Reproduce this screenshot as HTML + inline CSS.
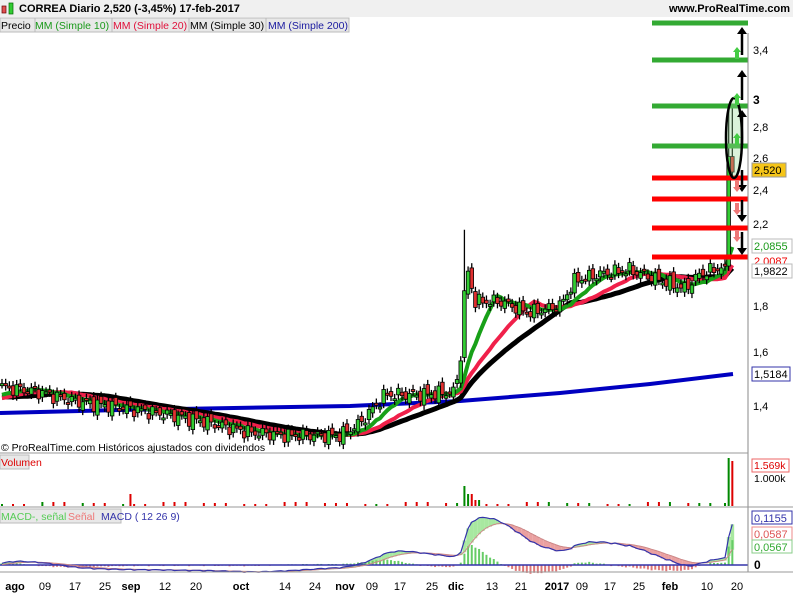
<!DOCTYPE html>
<html><head><meta charset="utf-8"><style>
html,body{margin:0;padding:0;background:#fff;width:793px;height:593px;overflow:hidden;font-family:"Liberation Sans",sans-serif}
svg{display:block}
</style></head><body>
<svg id="s" width="793" height="593" xmlns="http://www.w3.org/2000/svg" font-family="Liberation Sans, sans-serif">
<rect x="0" y="0" width="793" height="17" fill="#f0f0f0"/>
<rect x="2" y="6" width="4" height="7" fill="#e05050" stroke="#600" stroke-width="0.7"/>
<rect x="9" y="3" width="4" height="11" fill="#3c3" stroke="#060" stroke-width="0.7"/>
<text x="19" y="12" font-size="11" font-weight="bold" fill="#000">CORREA   Diario   2,520 (-3,45%)   17-feb-2017</text>
<text x="790" y="12" font-size="11" font-weight="bold" fill="#000" text-anchor="end">www.ProRealTime.com</text>
<rect x="0" y="18" width="349" height="14" fill="#e8e8e8" stroke="#bbb"/>
<text x="1" y="29" font-size="10.5" fill="#000">Precio</text>
<text x="35" y="29" font-size="10.5" fill="#1a9a1a">MM (Simple 10)</text>
<text x="113" y="29" font-size="10.5" fill="#e0103a">MM (Simple 20)</text>
<text x="190" y="29" font-size="10.5" fill="#000">MM (Simple 30)</text>
<text x="268" y="29" font-size="10.5" fill="#1a1aa0">MM (Simple 200)</text>
<line x1="35" y1="18" x2="35" y2="32" stroke="#bbb"/><line x1="112" y1="18" x2="112" y2="32" stroke="#bbb"/><line x1="189" y1="18" x2="189" y2="32" stroke="#bbb"/><line x1="266" y1="18" x2="266" y2="32" stroke="#bbb"/>
<g id="main"></g>
<line x1="748" y1="33" x2="748" y2="572" stroke="#888"/>
<line x1="0" y1="453" x2="748" y2="453" stroke="#999"/>
<line x1="0" y1="507" x2="793" y2="507" stroke="#999"/>
<line x1="0" y1="572" x2="793" y2="572" stroke="#999"/>
<text x="1" y="451" font-size="10.5" fill="#000">© ProRealTime.com  Históricos ajustados con dividendos</text>
<rect x="0" y="455" width="29" height="14" fill="#e8e8e8" stroke="#bbb"/>
<text x="1" y="466" font-size="10.5" fill="#d00">Volumen</text>
<rect x="0" y="509" width="121" height="14" fill="#e8e8e8" stroke="#bbb"/>
<text x="1" y="520" font-size="10.5" fill="#5c5">MACD-, señal</text>
<text x="68" y="520" font-size="10.5" fill="#e77">Señal</text>
<text x="101" y="520" font-size="10.5" fill="#33a">MACD ( 12 26 9)</text>
<g font-size="11" fill="#000">
<text x="753" y="54">3,4</text><text x="753" y="104" font-weight="bold" font-size="12">3</text><text x="753" y="131">2,8</text><text x="753" y="162">2,6</text><text x="753" y="194">2,4</text><text x="753" y="228">2,2</text><text x="753" y="310">1,8</text><text x="753" y="356">1,6</text><text x="753" y="410">1,4</text>
</g>
<rect x="752" y="163" width="34" height="14" fill="#f5c518" stroke="#999"/><text x="754" y="174" font-size="11">2,520</text>
<rect x="752" y="239" width="40" height="14" fill="#fff" stroke="#bbb"/><text x="754" y="250" font-size="11" fill="#1a9a1a">2,0855</text>
<text x="754" y="265" font-size="11" fill="#e00">2,0087</text>
<rect x="752" y="264" width="40" height="14" fill="#fff" stroke="#bbb"/><text x="754" y="275" font-size="11">1,9822</text>
<rect x="752" y="367" width="38" height="14" fill="#fff" stroke="#33a"/><text x="754" y="378" font-size="11">1,5184</text>
<rect x="752" y="459" width="37" height="13" fill="#fff" stroke="#e66"/><text x="754" y="469" font-size="10.5" fill="#d00">1.569k</text>
<text x="754" y="482" font-size="10.5">1.000k</text>
<rect x="752" y="511" width="40" height="13" fill="#fff" stroke="#33a"/><text x="754" y="522" font-size="11" fill="#33a">0,1155</text>
<rect x="752" y="527" width="40" height="13" fill="#fff" stroke="#e88"/><text x="754" y="538" font-size="11" fill="#d55">0,0587</text>
<rect x="752" y="540" width="40" height="13" fill="#fff" stroke="#8c8"/><text x="754" y="551" font-size="11" fill="#3a3">0,0567</text>
<text x="754" y="569" font-size="12" font-weight="bold">0</text>
<g font-size="11" fill="#000" text-anchor="middle">
<text x="15" y="590" font-weight="bold">ago</text><text x="45" y="590">09</text><text x="75" y="590">17</text><text x="105" y="590">25</text><text x="131" y="590" font-weight="bold">sep</text><text x="165" y="590">12</text><text x="196" y="590">20</text><text x="241" y="590" font-weight="bold">oct</text><text x="285" y="590">14</text><text x="315" y="590">24</text><text x="345" y="590" font-weight="bold">nov</text><text x="372" y="590">09</text><text x="400" y="590">17</text><text x="432" y="590">25</text><text x="456" y="590" font-weight="bold">dic</text><text x="492" y="590">13</text><text x="521" y="590">21</text><text x="557" y="590" font-weight="bold">2017</text><text x="582" y="590">09</text><text x="610" y="590">17</text><text x="639" y="590">25</text><text x="670" y="590" font-weight="bold">feb</text><text x="707" y="590">10</text><text x="737" y="590">20</text>
</g>
</svg>
<script>
var NS="http://www.w3.org/2000/svg",g=document.getElementById("main");
function el(t,a){var e=document.createElementNS(NS,t);for(var k in a)e.setAttribute(k,a[k]);g.appendChild(e);return e;}
function Y(p){return 406-398*Math.log(p/1.4);}
var kp=[[0,1.47],[40,1.45],[70,1.42],[110,1.40],[150,1.38],[200,1.35],[250,1.31],[290,1.30],[340,1.30],[360,1.34],[385,1.44],[420,1.44],[455,1.45],[462,1.62],[466,2.0],[475,1.82],[500,1.82],[530,1.77],[560,1.80],[575,1.92],[600,1.95],[630,1.97],[660,1.92],[685,1.88],[700,1.95],[720,1.98],[740,1.99]];
function interp(x){for(var i=1;i<kp.length;i++){if(x<=kp[i][0]){var a=kp[i-1],b=kp[i];return a[1]+(b[1]-a[1])*(x-a[0])/(b[0]-a[0]);}}return kp[kp.length-1][1];}
var N=200,dx=3.67,cl=[],xs=[];
var pre=[];for(var i=0;i<200;i++)pre.push(1.5-0.0004*i+0.02*Math.sin(i*0.3));
for(var i=0;i<N;i++){var x=2+dx*i;xs.push(x);var p=interp(x);if(x<720)p*=1+0.012*Math.sin(i*1.7)+0.008*Math.cos(i*2.9);cl.push(p);}
cl[197]=1.99;cl[198]=2.62;cl[199]=2.52;
var all=pre.concat(cl);
function ma(n){var r=[];for(var i=0;i<N;i++){var s=0;for(var j=0;j<n;j++)s+=all[200+i-j];r.push(s/n);}return r;}
function line(arr,c,w,ys){var d="";for(var i=0;i<N;i++)d+=(i?"L":"M")+xs[i].toFixed(1)+" "+(ys?ys(arr[i]):Y(arr[i])).toFixed(1);el("path",{d:d,fill:"none",stroke:c,"stroke-width":w,"stroke-linejoin":"round"});}
el("path",{d:"M0 413 L120 410 L350 406 L460 401 L560 393 L650 384 L733 374",fill:"none",stroke:"#0000c0","stroke-width":4});
line(ma(30),"#000",5);line(ma(20),"#f0204a",4);line(ma(10),"#18a018",4);
for(var i=0;i<N;i++){var o=i?cl[i-1]*(1+0.01*Math.sin(i*3.1)):cl[0],c=cl[i];if(i>=198)o=cl[i-1];
var hi=Math.max(o,c)*1.012,lo=Math.min(o,c)*0.988;if(xs[i]>462&&xs[i]<466)hi=2.18;if(i>=198)hi=2.97;
var x=xs[i];el("line",{x1:x,x2:x,y1:Y(hi),y2:Y(lo),stroke:"#000","stroke-width":1.3});
var t=Y(Math.max(o,c)),b=Y(Math.min(o,c));if(b-t<2)b=t+2;el("rect",{x:x-1.8,y:t,width:3.6,height:b-t,fill:c>=o?"#3c3":"#e03030",stroke:"#000","stroke-width":0.8});}
[[23,"#3a3"],[60,"#3a3"],[106,"#3a3"],[146,"#3a3"],[178,"#f00"],[199,"#f00"],[228,"#f00"],[257,"#f00"]].forEach(function(l){el("line",{x1:652,x2:748,y1:l[0],y2:l[0],stroke:l[1],"stroke-width":5});});
el("ellipse",{cx:734,cy:138,rx:8,ry:40,fill:"rgba(150,220,150,0.35)",stroke:"#000","stroke-width":2.5});
[[55,27],[100,70],[145,110],[170,192],[200,222],[232,255]].forEach(function(a){var up=a[0]>a[1];el("line",{x1:742,x2:742,y1:a[0],y2:a[1]+(up?4:-4),stroke:"#000","stroke-width":2.5});var y=a[1];el("path",{d:up?"M737 "+(y+7)+" L742 "+y+" L747 "+(y+7)+"Z":"M737 "+(y-7)+" L742 "+y+" L747 "+(y-7)+"Z",fill:"#000"});});
[[59,47],[105,93],[145,133]].forEach(function(a){el("path",{d:"M735 "+a[0]+" L735 "+(a[1]+5)+" L733 "+(a[1]+5)+" L737 "+a[1]+" L741 "+(a[1]+5)+" L739 "+(a[1]+5)+" L739 "+a[0]+"Z",fill:"#4c4"});});
[[180,192],[203,215],[230,242]].forEach(function(a){el("path",{d:"M735 "+a[0]+" L735 "+(a[1]-5)+" L733 "+(a[1]-5)+" L737 "+a[1]+" L741 "+(a[1]-5)+" L739 "+(a[1]-5)+" L739 "+a[0]+"Z",fill:"#e77"});});
for(var i=0;i<N;i++){var h=((i*37)%11<3)?2+(i%3):0;var x=xs[i];if(x>462&&x<466)h=20;if(x>466&&x<474)h=12;if(x>474&&x<480)h=6;if(x>130&&x<134)h=12;if(i==197)h=3;if(i==198)h=48;if(i==199)h=45;if(h)el("rect",{x:x-1,y:506-h,width:2,height:h,fill:cl[i]>=(i?cl[i-1]:0)?"#080":"#d00"});}
function ema(a,n){var k=2/(n+1),r=[a[0]];for(var i=1;i<a.length;i++)r.push(a[i]*k+r[i-1]*(1-k));return r;}
var e12=ema(all,12),e26=ema(all,26),m=[],s;for(var i=0;i<all.length;i++)m.push(e12[i]-e26[i]);s=ema(m,9);m=m.slice(200);s=s.slice(200);
function YM(v){return 565-400*v;}
for(var i=0;i<N;i++){var a=YM(m[i]),b=YM(s[i]);el("rect",{x:xs[i]-1.85,y:Math.min(a,b),width:3.7,height:Math.abs(a-b)+0.5,fill:m[i]>s[i]?"#a8e8a0":"#eaa0a0"});
var h=m[i]-s[i],y0=565,y1=YM(h);el("rect",{x:xs[i]-1,y:Math.min(y0,y1),width:2,height:Math.abs(y1-y0)+0.5,fill:h>=0?"#6c6":"#d77"});}
el("line",{x1:0,x2:748,y1:565,y2:565,stroke:"#33a","stroke-width":1.5});
line(s,"#c88",1,YM);line(m,"#33a",1.2,YM);
</script>
</body></html>
